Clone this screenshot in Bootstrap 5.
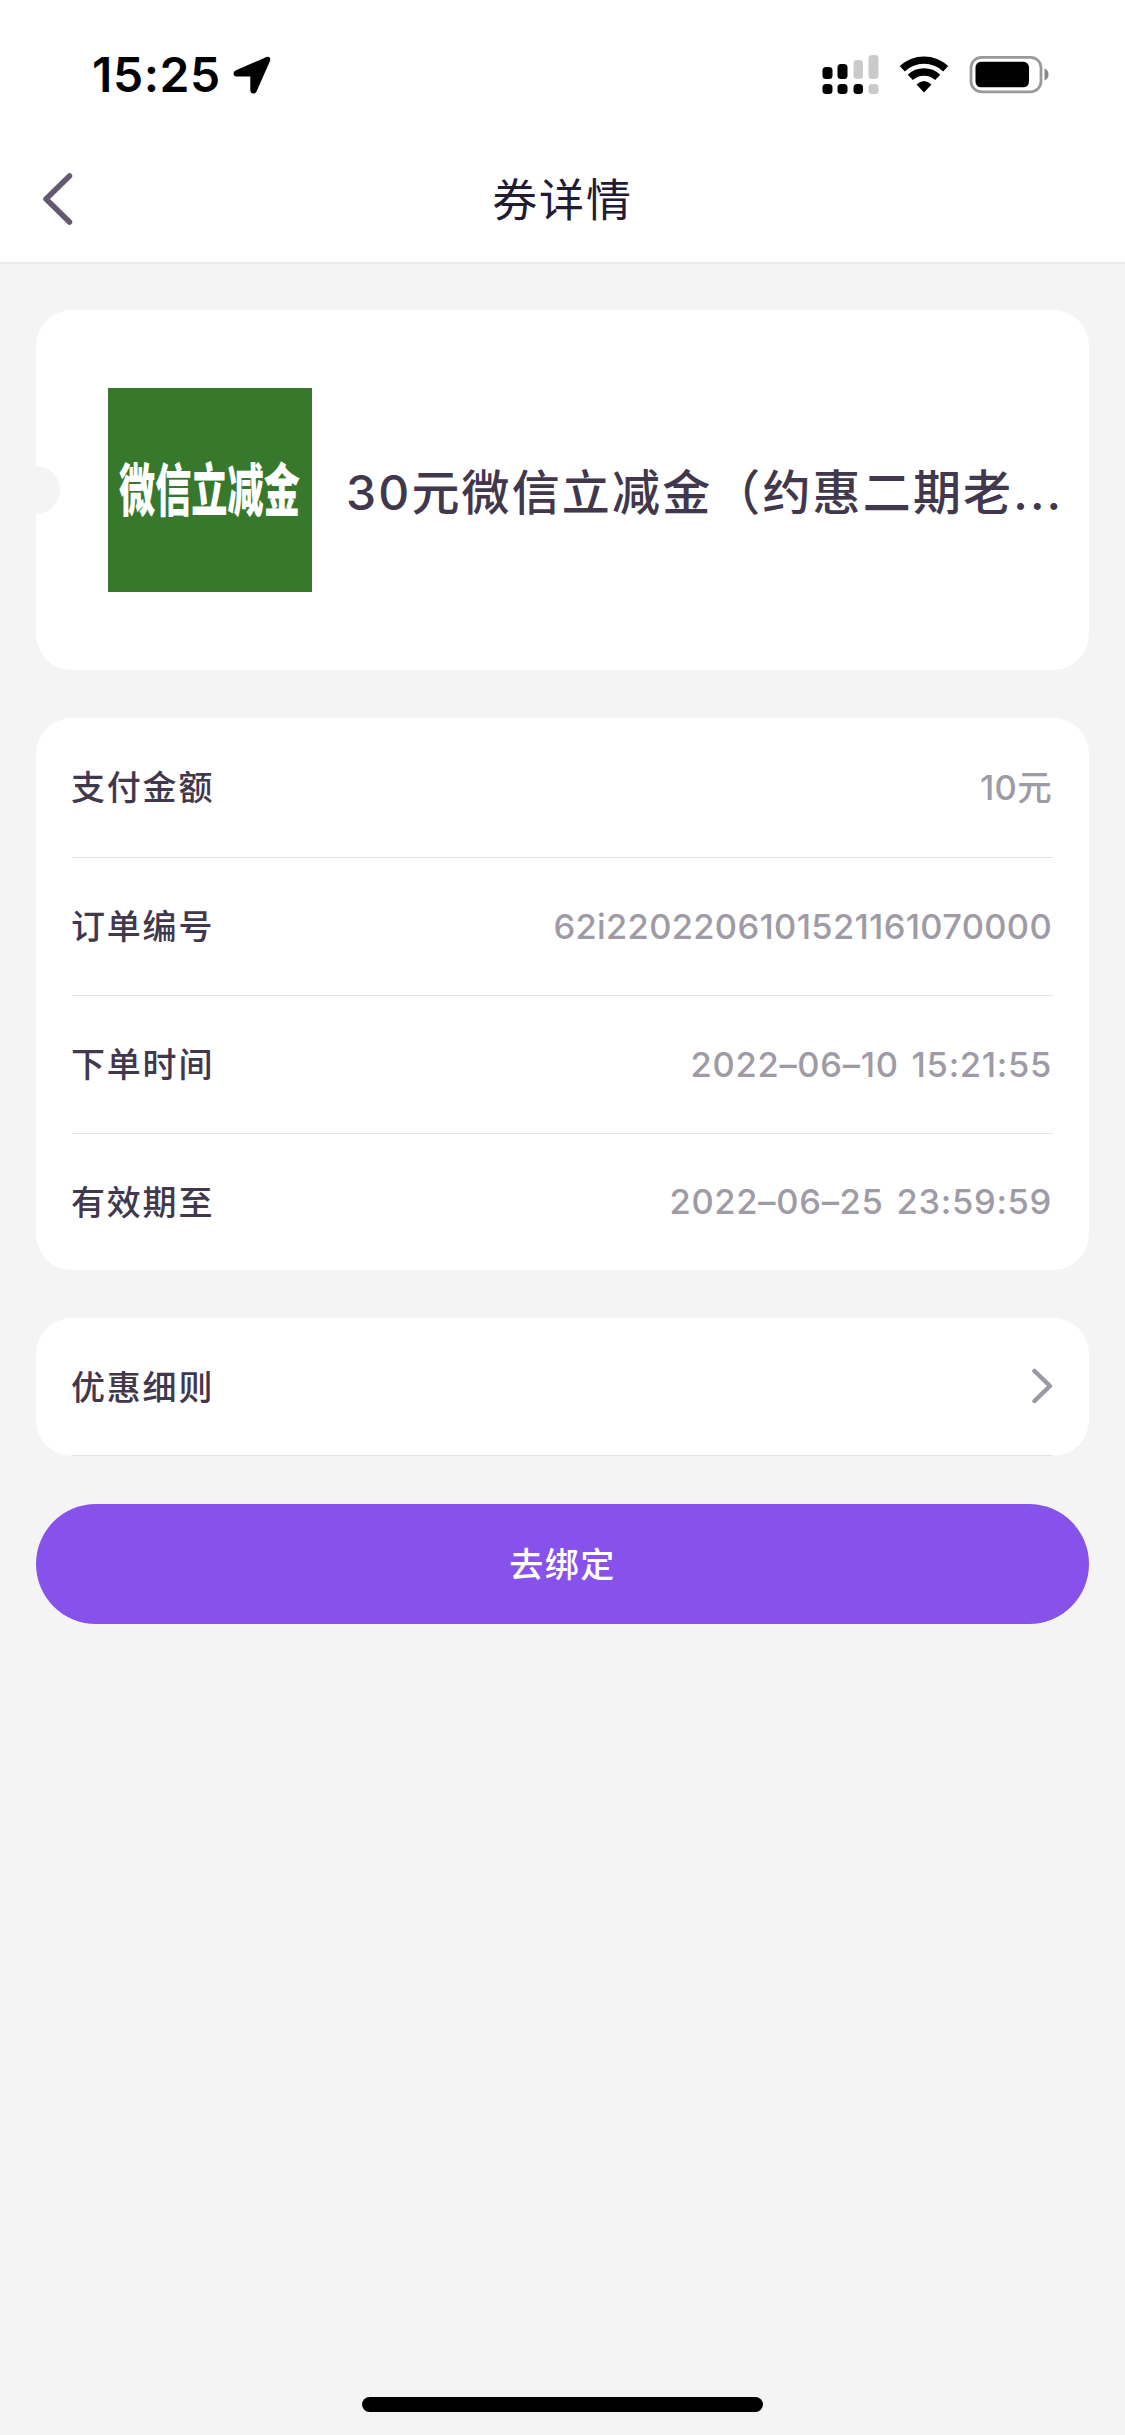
<!DOCTYPE html>
<html lang="zh-CN">
<head>
<meta charset="utf-8">
<meta name="viewport" content="width=device-width, initial-scale=1">
<title>券详情</title>
<link href="https://cdn.jsdelivr.net/npm/bootstrap@5.3.0/dist/css/bootstrap.min.css" rel="stylesheet">
<style>
body{background:#f4f4f4;color:#41384d;font-family:Inter,"Noto Sans CJK SC",sans-serif;min-height:2435px}
.status-bar{height:138px;padding:12px 76px 0 92px}
.clock{font-size:48px;font-weight:600;color:#000;line-height:1;letter-spacing:.6px}
.locate{margin-left:12px}
.title-bar{height:126px;border-bottom:2px solid #e9e9e9;padding:0 40px 2px}
.title-bar h1{font-size:45px;font-weight:400;letter-spacing:1.8px;color:#221b33;line-height:1;padding-top:2px}
.side-slot{width:60px}
.page-body{padding:46px 36px 0;gap:48px}
.panel{border:0;border-radius:36px;background:#fff}
.coupon{height:360px;padding:0 24px 0 72px;overflow:hidden}
.notch{width:48px;height:48px;left:-24px;top:156px;background:#f4f4f7}
.coupon-name{font-size:48px;font-weight:500;letter-spacing:2.15px;margin-left:34px;line-height:72px;padding-top:6px}
.panel .list-group-item{height:138px;padding:1px 0 0;margin:0 36px;border-color:#e4e4e6;color:#41384d;background:transparent;border-width:0 0 1px}
.panel .list-group-item:first-child{height:140px}
.panel .list-group-item:last-child{border-color:transparent;height:136px}
.field-name{font-size:34px;font-weight:500;letter-spacing:1.8px;line-height:1;margin-left:-1px}
.field-value{font-size:34.5px;font-weight:500;color:#9f9ba6;letter-spacing:.3px;line-height:1;margin-right:1px}
.field-time{letter-spacing:.7px;word-spacing:3px}
.rules{height:138px;padding:0 36px}
.rules .field-name{padding-top:1px}
.rules::after{content:"";position:absolute;left:36px;right:36px;bottom:0;height:1px;background:#e4e4e6}
.bind-btn{height:120px;background:#8652eb;color:#fff;font-size:34px;font-weight:500;letter-spacing:1.5px}
.home-indicator{width:401px;height:15px;background:#000;margin:0 auto 23px}
</style>
<script src="https://cdn.jsdelivr.net/npm/bootstrap@5.3.0/dist/js/bootstrap.bundle.min.js"></script>
</head>
<body class="d-flex flex-column">
<header class="bg-white">
  <div class="status-bar d-flex align-items-center justify-content-between">
    <div class="d-flex align-items-center">
      <span class="clock">15:25</span>
      <svg class="locate" width="38" height="38" viewBox="0 0 38 38"><path d="M33.5 1 3 14.2C-.5 16-.2 20.300 3.500 20.600H17.300V34.500C17.500 38 21.800 38.800 23.500 35.500L37 5C38 2 36.500 0 33.500 1Z"/></svg>
    </div>
    <svg width="227" height="42" viewBox="0 0 227 42">
      <g><rect x=".5" y="13" width="10" height="12" rx="3.5"/><rect x="15.500" y="10" width="10" height="15" rx="3.5"/><rect x=".5" y="30" width="10" height="10" rx="3.5"/><rect x="15.500" y="30" width="10" height="10" rx="3.5"/><rect x="31.500" y="30" width="9.500" height="10" rx="3.5"/></g>
      <g fill="#cacaca"><rect x="31.500" y="6" width="9.500" height="19" rx="3.5"/><rect x="46.500" y="1" width="10" height="24" rx="3.5"/><rect x="46.500" y="30" width="10" height="10" rx="3.5"/></g>
      <g fill="none" stroke="#000"><path stroke-width="7.400" d="M80.300 14.800A31.500 31.500 0 0 1 123.700 14.800"/><path stroke-width="7.400" d="M88.300 23.400A20 20 0 0 1 115.700 23.400"/></g>
      <path d="M94.500 30.500Q102 23.500 109.500 30.500L102 38.500Z"/>
      <rect x="149" y="3.300" width="70" height="34.500" rx="10.500" fill="none" stroke="#999" stroke-width="2.800"/><rect x="153.500" y="7.800" width="53.500" height="25.500" rx="5.500"/><path d="M222.500 14.500Q226.500 16 226.500 20.500T222.500 26.500Z" fill="#888"/>
    </svg>
  </div>
  <div class="title-bar d-flex align-items-center justify-content-between">
    <div class="side-slot d-flex"><svg width="36" height="56" viewBox="0 0 36 56"><path d="M29.500 5 6 28 29.500 51" fill="none" stroke="#655972" stroke-width="5.500" stroke-linecap="round" stroke-linejoin="round"/></svg></div>
    <h1 class="m-0">券详情</h1>
    <div class="side-slot"></div>
  </div>
</header>
<main class="page-body d-flex flex-column flex-grow-1">
  <section class="panel coupon card flex-row align-items-center">
    <span class="notch rounded-circle position-absolute"></span>
    <svg class="flex-shrink-0" width="204" height="204" viewBox="0 0 204 204"><rect width="204" height="204" fill="#37782d"/><text transform="translate(11 123) scale(.635 1)" font-family="Noto Sans CJK SC, sans-serif" font-size="57" font-weight="900" fill="#fff">微信立减金</text></svg>
    <div class="coupon-name text-nowrap">30元微信立减金（约惠二期老...</div>
  </section>
  <section class="panel card">
    <ul class="list-group list-group-flush">
      <li class="list-group-item d-flex align-items-center justify-content-between"><span class="field-name">支付金额</span><span class="field-value">10元</span></li>
      <li class="list-group-item d-flex align-items-center justify-content-between"><span class="field-name">订单编号</span><span class="field-value">62i2202206101521161070000</span></li>
      <li class="list-group-item d-flex align-items-center justify-content-between"><span class="field-name">下单时间</span><span class="field-value field-time">2022–06–10 15:21:55</span></li>
      <li class="list-group-item d-flex align-items-center justify-content-between"><span class="field-name">有效期至</span><span class="field-value field-time">2022–06–25 23:59:59</span></li>
    </ul>
  </section>
  <section class="panel rules card flex-row align-items-center justify-content-between">
    <span class="field-name">优惠细则</span>
    <svg width="22" height="38" viewBox="0 0 22 38"><path d="M3.500 3 19 18 3.500 33" fill="none" stroke="#9c98a5" stroke-width="4.500" stroke-linecap="round" stroke-linejoin="round"/></svg>
  </section>
  <button type="button" class="btn bind-btn rounded-pill border-0 w-100">去绑定</button>
</main>
<div class="home-indicator rounded-pill"></div>
</body>
</html>
